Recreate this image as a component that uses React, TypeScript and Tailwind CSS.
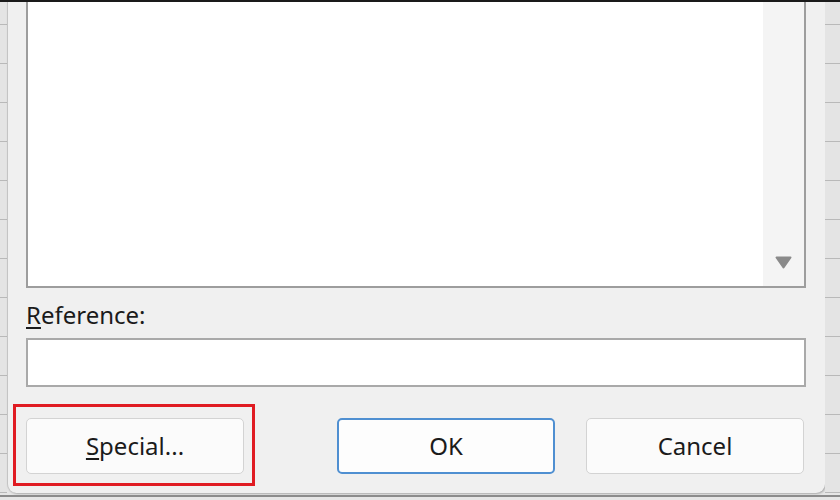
import type { ReactNode } from "react";

const font = { fontFamily: '"Noto Sans", "Open Sans", "Liberation Sans", sans-serif' };

function GridStrip({ width }: { width: string }) {
  // spreadsheet cells peeking out behind the dialog
  return (
    <div className={`${width} flex shrink-0 flex-col bg-[#e4e4e4]`}>
      <div className="h-[23px] shrink-0 border-b border-[#b9b9b9]" />
      {Array.from({ length: 12 }).map((_, i) => (
        <div key={i} className="h-[39px] shrink-0 border-b border-[#b9b9b9]" />
      ))}
    </div>
  );
}

function DialogButton({
  children,
  primary = false,
}: {
  children: ReactNode;
  primary?: boolean;
}) {
  return (
    <button
      type="button"
      className={
        primary
          ? "h-[56px] w-[218px] rounded-[5px] border-2 border-[#4f8fd1] bg-[#fdfdfd] text-[24px] text-[#1b1b1b]"
          : "h-[56px] w-[218px] rounded-[5px] border border-[#d3d3d3] bg-[#fbfbfb] text-[24px] text-[#1b1b1b]"
      }
    >
      {children}
    </button>
  );
}

export default function App() {
  return (
    <div
      className="flex h-[500px] w-[840px] flex-col overflow-hidden border-t-2 border-[#1a1a1a] bg-[#e6e6e6]"
      style={font}
    >
      <div className="flex h-[491px] shrink-0">
        <GridStrip width="w-[7px]" />

        {/* Go To dialog */}
        <div className="flex w-[818px] shrink-0 flex-col rounded-b-[9px] border-l border-[#c4c4c4] bg-[#f0f0f0] pr-[19px] pb-[19px] pl-[18px] shadow-[1px_1px_2px_rgba(0,0,0,0.25)]">
          {/* list box */}
          <div className="flex h-[286px] shrink-0 border-x-2 border-b-2 border-[#9d9d9d] bg-white">
            <div className="flex-1" />
            <div className="flex w-[41px] flex-col items-center justify-end bg-[#f4f4f4] pb-[17px]">
              <svg width="17" height="13" viewBox="0 0 17 13">
                <path d="M1.5 1.5 H15.5 L8.5 11.5 Z" fill="#8a8a8a" stroke="#8a8a8a" strokeWidth="2" strokeLinejoin="round" />
              </svg>
            </div>
          </div>

          <label className="mt-[12px] text-[24px] leading-[30px] text-[#1b1b1b]">
            <span className="underline underline-offset-[3px]">R</span>eference:
          </label>

          <div className="mt-[8px] h-[49px] shrink-0 border-2 border-[#a9a9a9] bg-white" />

          <div className="mt-[31px] flex items-center justify-between">
            <div className="relative">
              <DialogButton>
                <span className="underline underline-offset-[3px]">S</span>pecial...
              </DialogButton>
              {/* highlight annotation */}
              <div className="pointer-events-none absolute -top-[14px] -left-[13px] h-[82px] w-[242px] border-[3px] border-[#e01b22]" />
            </div>
            <div className="mr-[2px] flex gap-[31px]">
              <DialogButton primary>OK</DialogButton>
              <DialogButton>Cancel</DialogButton>
            </div>
          </div>
        </div>

        <GridStrip width="w-[15px]" />
      </div>
      <div className="mt-[2px] h-[2px] shrink-0 bg-[#8c8c8c]" />
    </div>
  );
}
